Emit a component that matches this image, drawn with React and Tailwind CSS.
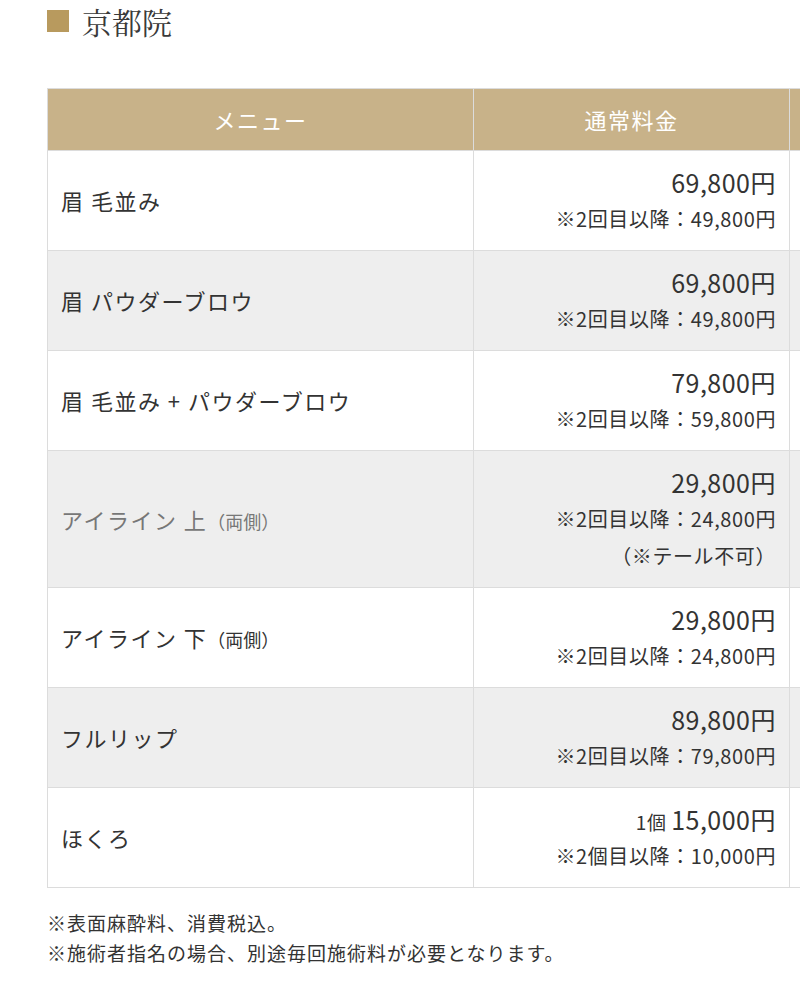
const rows = [
  { name: '眉 毛並み', price: '69,800円', sub: ['※2回目以降：49,800円'] },
  { name: '眉 パウダーブロウ', price: '69,800円', sub: ['※2回目以降：49,800円'], gray: true },
  { name: '眉 毛並み + パウダーブロウ', price: '79,800円', sub: ['※2回目以降：59,800円'] },
  { name: 'アイライン 上', note: '（両側）', price: '29,800円', sub: ['※2回目以降：24,800円', '（※テール不可）'], gray: true, dim: true },
  { name: 'アイライン 下', note: '（両側）', price: '29,800円', sub: ['※2回目以降：24,800円'] },
  { name: 'フルリップ', price: '89,800円', sub: ['※2回目以降：79,800円'], gray: true },
  { name: 'ほくろ', pre: '1個 ', price: '15,000円', sub: ['※2個目以降：10,000円'] },
];

const App = () => {
  return (
    <div className="w-[800px] min-h-[982px] overflow-hidden bg-white text-[#333] font-['Noto_Sans_CJK_JP','Noto_Sans',sans-serif]">
      {/* title */}
      <div className="flex items-center gap-[13px] pl-[47px] pt-[1px] h-[40px]">
        <span className="w-[22px] h-[22px] bg-[#b89a5e]" />
        <h2 className="text-[30px] leading-[38px] text-[#3a3a3a] font-['Noto_Serif_CJK_JP','Liberation_Serif','Noto_Sans_CJK_JP',serif]">京都院</h2>
      </div>

      <div className="pl-[47px] mt-[48px]">
        <table className="border-collapse table-fixed w-[1042px]">
          <colgroup>
            <col className="w-[426px]" />
            <col className="w-[316px]" />
            <col className="w-[300px]" />
          </colgroup>
          <thead>
            <tr className="bg-[#c8b289] text-white text-[22px] tracking-[1.5px] h-[62px]">
              <th className="border border-[#dcdcdc] font-normal">メニュー</th>
              <th className="border border-[#dcdcdc] font-normal">通常料金</th>
              <th className="border border-[#dcdcdc] font-normal"></th>
            </tr>
          </thead>
          <tbody>
            {rows.map((r, i) => (
              <tr key={i} className={r.gray ? 'bg-[#eeeeee]' : 'bg-white'}>
                <td className={`border border-[#dcdcdc] pl-[13px] text-[22px] tracking-[1.5px] align-middle ${r.dim ? 'text-[#777]' : 'text-[#333]'}`}>
                  {r.name}
                  {r.note && <span className="text-[18px] tracking-normal">{r.note}</span>}
                </td>
                <td className="border border-[#dcdcdc] pr-[13px] py-[13px] text-right">
                  <div className="h-[36px] text-[25px] leading-[36px] tracking-[0.5px] text-[#333]">
                    {r.pre && <span className="text-[19px]">{r.pre}</span>}
                    {r.price}
                  </div>
                  {r.sub.map((s, j) => (
                    <div key={j} className="text-[20px] leading-[37px] tracking-[0.6px] text-[#333]">{s}</div>
                  ))}
                </td>
                <td className="border border-[#dcdcdc]"></td>
              </tr>
            ))}
          </tbody>
        </table>
      </div>

      <div className="pl-[47px] pt-[20px] text-[19px] leading-[30px] tracking-[1px] text-[#333]">
        <p>※表面麻酔料、消費税込。</p>
        <p>※施術者指名の場合、別途毎回施術料が必要となります。</p>
      </div>
    </div>
  );
};

export default App;
